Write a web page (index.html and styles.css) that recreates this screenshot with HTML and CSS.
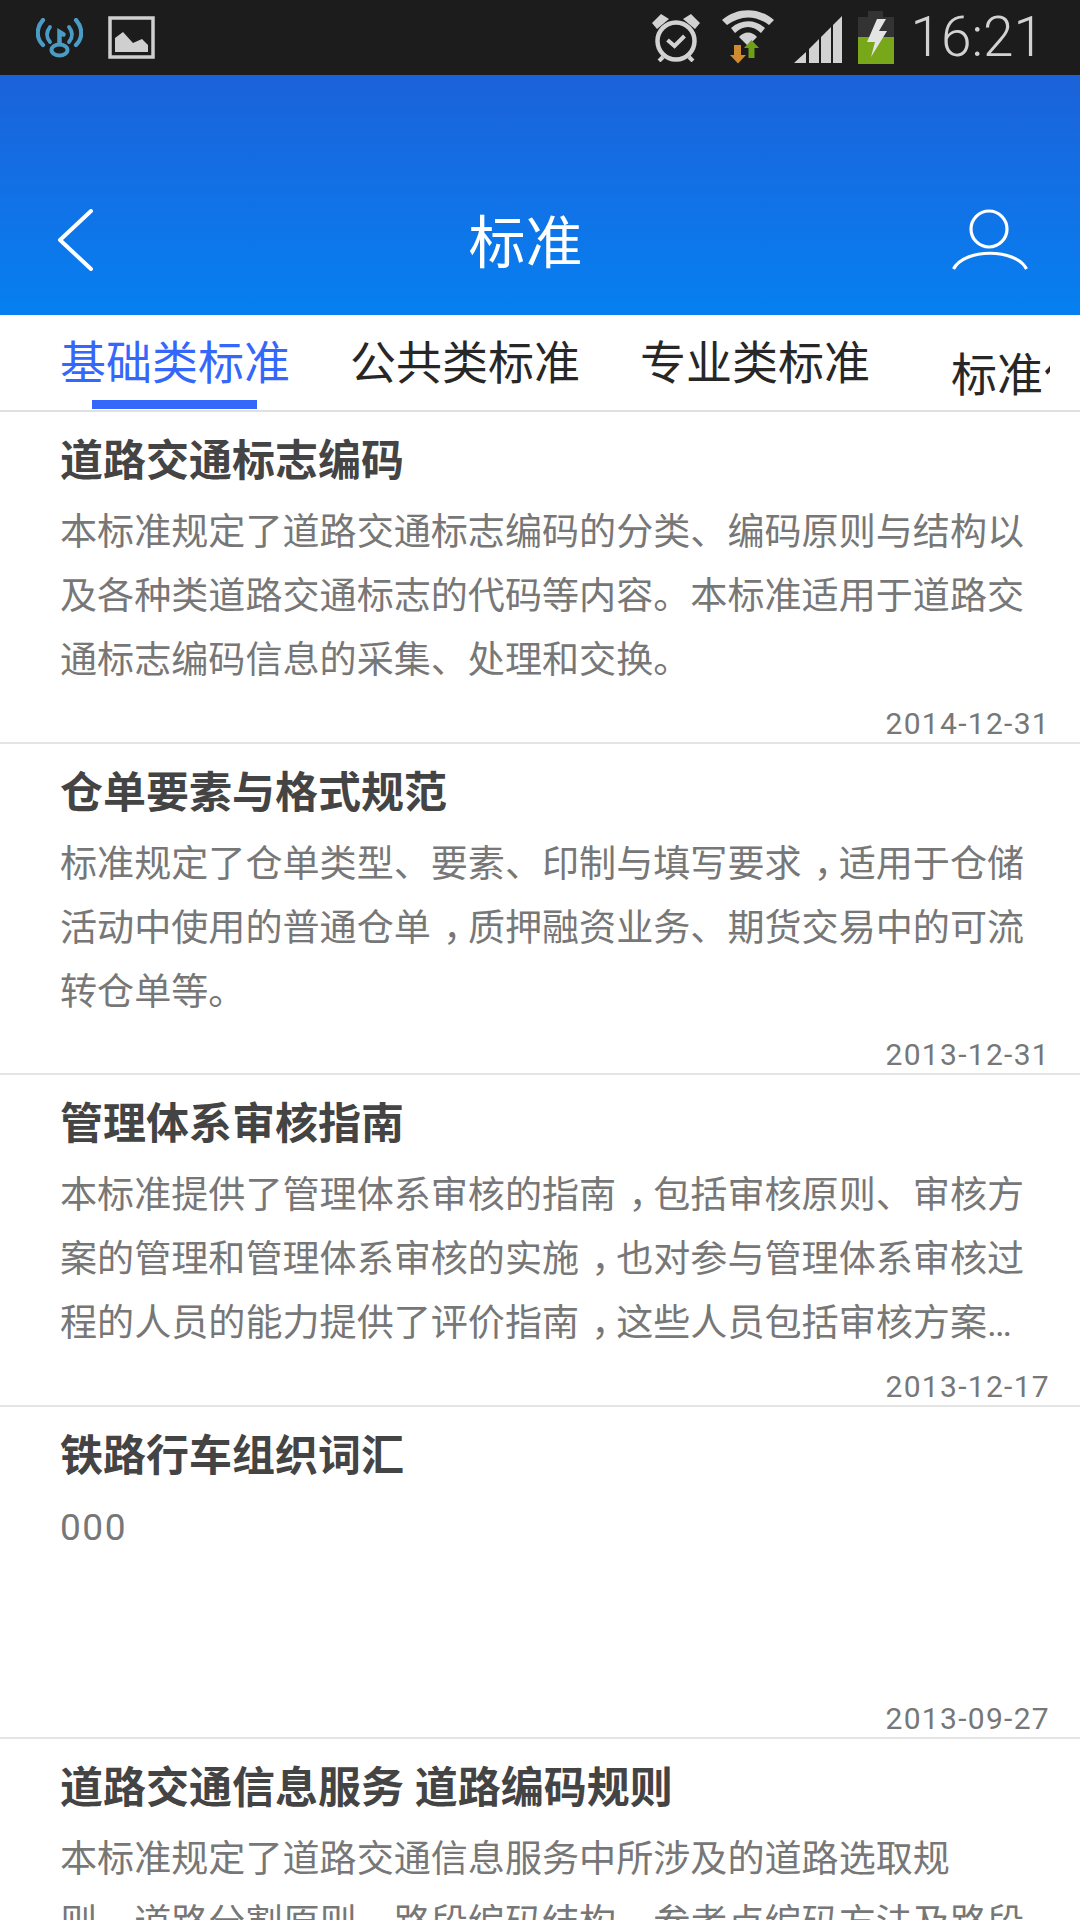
FILE: index.html
```html
<!DOCTYPE html>
<html lang="zh-CN">
<head>
<meta charset="utf-8">
<title>标准</title>
<link rel="stylesheet" href="styles.css">
</head>
<body>
<div class="screen">
  <div class="statusbar">
    <div class="status-left">
      <svg class="ic-key" viewBox="0 0 47 40" fill="none" stroke="#4b9cc4" stroke-linecap="round">
        <path d="M7 2C0 10 0 20 7 27" stroke-width="4.200"/>
        <path d="M40 2C47 10 47 20 40 27" stroke-width="4.200"/>
        <path d="M14 9C10 14 10 19 14 24" stroke-width="3.800"/>
        <path d="M33 9C37 14 37 19 33 24" stroke-width="3.800"/>
        <ellipse cx="23.500" cy="32" rx="8" ry="5.500" stroke-width="4"/>
        <path d="M23.500 26V14l4 2.500" stroke-width="4.500"/>
      </svg>
      <svg class="ic-pic" viewBox="0 0 47 43">
        <rect x="2" y="2" width="43" height="39" fill="none" stroke="#cfcfcf" stroke-width="3.500"/>
        <path d="M7 36V22l8-6 10 11 9-4 6 6v7z" fill="#cfcfcf"/>
      </svg>
    </div>
    <div class="status-right">
      <svg class="ic-alarm" viewBox="0 0 48 50" fill="none" stroke="#d2d2d2">
        <circle cx="24" cy="29" r="18.500" stroke-width="4.500"/>
        <path d="M0 11 9 2 17 7 5 17zM48 11 39 2 31 7 43 17z" fill="#d2d2d2" stroke="none"/>
        <path d="M15.500 28l7 6 10-10" stroke-width="4"/>
        <path d="M11 45l-4 4M37 45l4 4" stroke-width="4"/>
      </svg>
      <svg class="ic-wifi" viewBox="0 0 54 54">
        <path d="M0 10C15-3 37-3 52 10l-5 5C33 5 19 5 5 15z" fill="#d2d2d2"/>
        <path d="M9 18C19 9 33 9 43 18l-4 5C31 15 21 15 13 23z" fill="#d2d2d2"/>
        <path d="M17 27C22 21 30 21 35 27l-9 9z" fill="#d2d2d2"/>
        <path d="M12 35h7v10h5l-8 8.500L8 45h4z" fill="#d08a30"/>
        <path d="M26.500 48V38H22l7.500-8 7.500 8h-4.500v10z" fill="#6f9e17"/>
      </svg>
      <svg class="ic-signal" viewBox="0 0 48 47" fill="#d2d2d2">
        <path d="M0 47 12 36v11zM15 33l10-10v24H15zM27 21l10-10v36H27zM39 9 48 0v47h-9z"/>
      </svg>
      <svg class="ic-batt" viewBox="0 0 36 53">
        <path d="M10 0h15v6h11v20H0V6h10z" fill="#333"/>
        <rect y="26" width="36" height="27" fill="#78a81a"/>
        <path d="M19 8 9 31h8l-4 15 16-26h-8l7-12z" fill="#e4e4e4"/>
      </svg>
      <span class="clock">16:21</span>
    </div>
  </div>

  <header class="appbar">
    <svg class="ic-back" viewBox="0 0 36 62" fill="none" stroke="#fff" stroke-width="4" stroke-linecap="round" stroke-linejoin="round">
      <path d="M34 2 3 31 34 60"/>
    </svg>
    <h1 class="appbar-title">标准</h1>
    <svg class="ic-user" viewBox="0 0 76 62" fill="none" stroke="#fff" stroke-width="3.200">
      <circle cx="37" cy="20" r="18"/>
      <path d="M1.500 60C12 39 64 39 74.500 60"/>
    </svg>
  </header>

  <nav class="tabs">
    <div class="tab tab-active">基础类标准</div>
    <div class="tab">公共类标准</div>
    <div class="tab">专业类标准</div>
    <div class="tab tab-low">标准化</div>
  </nav>

  <main class="list">
    <article class="item">
      <h2 class="item-title">道路交通标志编码</h2>
      <p class="item-desc">本标准规定了道路交通标志编码的分类、编码原则与结构以及各种类道路交通标志的代码等内容。本标准适用于道路交通标志编码信息的采集、处理和交换。</p>
      <time class="item-date">2014-12-31</time>
    </article>
    <article class="item">
      <h2 class="item-title">仓单要素与格式规范</h2>
      <p class="item-desc">标准规定了仓单类型、要素、印制与填写要求<span class="cm">，</span>适用于仓储活动中使用的普通仓单<span class="cm">，</span>质押融资业务、期货交易中的可流转仓单等。</p>
      <time class="item-date">2013-12-31</time>
    </article>
    <article class="item">
      <h2 class="item-title">管理体系审核指南</h2>
      <p class="item-desc">本标准提供了管理体系审核的指南<span class="cm">，</span>包括审核原则、审核方案的管理和管理体系审核的实施<span class="cm">，</span>也对参与管理体系审核过程的人员的能力提供了评价指南<span class="cm">，</span>这些人员包括审核方案的管理人员和审核员。</p>
      <time class="item-date">2013-12-17</time>
    </article>
    <article class="item">
      <h2 class="item-title">铁路行车组织词汇</h2>
      <p class="item-desc item-num">000</p>
      <time class="item-date">2013-09-27</time>
    </article>
    <article class="item">
      <h2 class="item-title">道路交通信息服务 道路编码规则</h2>
      <p class="item-desc">本标准规定了道路交通信息服务中所涉及的道路选取规<br>则、道路分割原则、路段编码结构、参考点编码方法及路段</p>
    </article>
  </main>
</div>
</body>
</html>
```
FILE: styles.css
```css
* { box-sizing: border-box; margin: 0; padding: 0; }
html, body { width: 1080px; height: 1920px; overflow: hidden; background: #fff; }
body { font-family: Roboto, "Noto Sans CJK SC", sans-serif; }
.screen { width: 1080px; height: 1920px; overflow: hidden; display: flex; flex-direction: column; }

.statusbar { flex: none; height: 75px; background: #1c1c1c; display: flex; justify-content: space-between; align-items: flex-start; padding: 0 36px 0 36px; }
.status-left { display: flex; align-items: flex-start; gap: 25px; padding-top: 16px; }
.ic-key { width: 47px; height: 40px; margin-top: 2px; }
.ic-pic { width: 47px; height: 43px; }
.status-right { display: flex; align-items: flex-start; }
.ic-alarm { width: 48px; height: 50px; margin-top: 12px; margin-right: 22px; }
.ic-wifi { width: 54px; height: 54px; margin-top: 10px; margin-right: 18px; }
.ic-signal { width: 48px; height: 47px; margin-top: 16px; margin-right: 16px; }
.ic-batt { width: 36px; height: 53px; margin-top: 11px; margin-right: 16px; }
.clock { font-family: Roboto, sans-serif; font-weight: 300; font-size: 55px; line-height: 75px; color: #d2d2d2; }

.appbar { flex: none; height: 240px; background: linear-gradient(#1b62d9, #1271e6 50%, #0580f0); display: flex; align-items: flex-start; justify-content: space-between; padding: 134px 52px 0 57px; }
.ic-back { width: 36px; height: 62px; }
.ic-user { width: 76px; height: 62px; }
.appbar-title { font-size: 57px; font-weight: 400; line-height: 62px; color: #fff; margin: 4px 0 0 6px; }

.tabs { flex: none; height: 97px; width: 1080px; padding: 10px 30px 0 60px; border-bottom: 2px solid #e0e0e0; display: flex; gap: 60px; }
.tab { flex: none; font-size: 46px; line-height: 76px; color: #272727; white-space: nowrap; position: relative; }
.tab-low { margin-top: 12px; margin-left: 21px; width: 99px; height: 70px; overflow: hidden; }
.tab-active { color: #3567fa; }
.tab-active::after { content: ""; position: absolute; left: 32px; width: 165px; height: 9px; top: 75px; background: #3567fa; }

.list { flex: 1; min-height: 0; }
.item { height: 331.700px; border-bottom: 2px solid #e4e4e4; padding: 22px 30px 0 60px; display: flex; flex-direction: column; }
.item-title { font-size: 43px; font-weight: 700; line-height: 54px; color: #444; white-space: nowrap; }
.item-desc { font-size: 37.100px; line-height: 64px; color: #777; padding-right: 10px; margin-top: 13px; height: 192px; text-spacing-trim: space-all; display: -webkit-box; -webkit-box-orient: vertical; -webkit-line-clamp: 3; overflow: hidden; }
.item-num { letter-spacing: 1.500px; }
.cm { font-feature-settings: "halt"; padding: 0 0.17em 0 0.33em; }
.item-date { font-size: 30px; line-height: 34px; color: #777; letter-spacing: 1.300px; text-align: right; margin-top: auto; margin-bottom: 1px; }
```
